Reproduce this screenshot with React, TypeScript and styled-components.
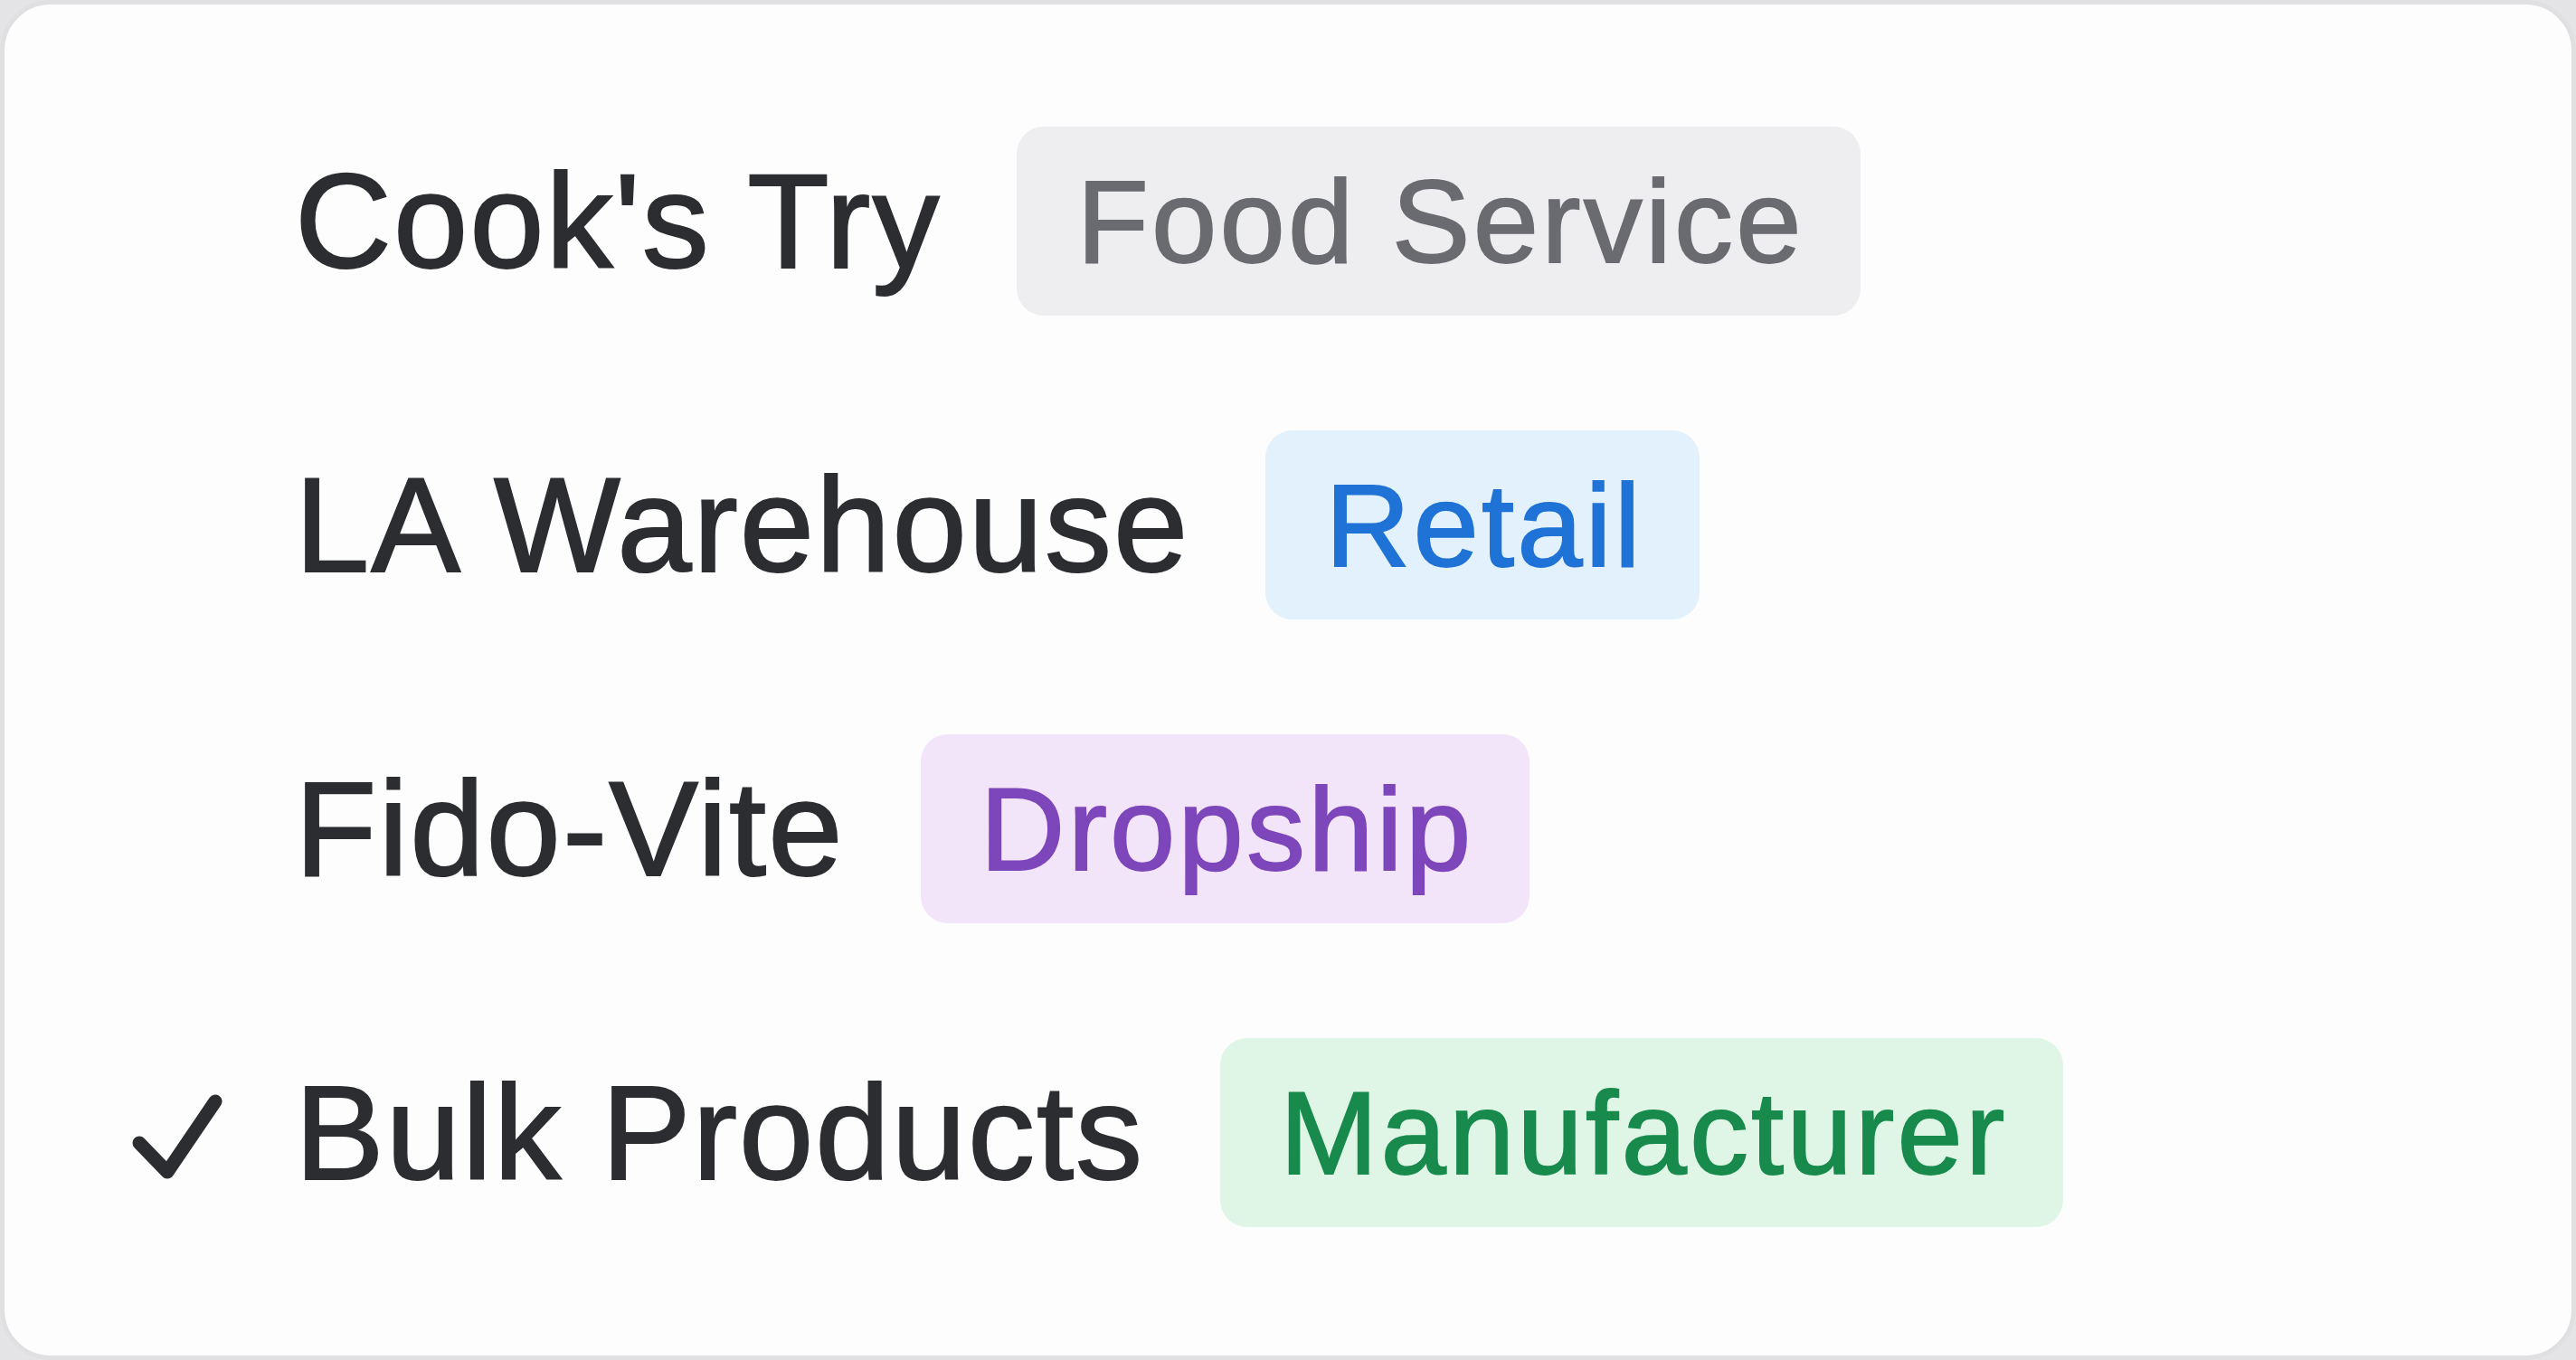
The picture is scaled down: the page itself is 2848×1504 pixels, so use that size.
import styled, { createGlobalStyle } from 'styled-components';

const GlobalStyle = createGlobalStyle`
    html, body {
        margin: 0;
        padding: 0;
        background: #e4e4e6;
    }
    body {
        font-family: "Liberation Sans", Arial, sans-serif;
    }
`;

type Tone = 'gray' | 'blue' | 'purple' | 'green';

const tones: Record<Tone, { bg: string; fg: string }> = {
    gray: { bg: '#eeeef0', fg: '#6a6b70' },
    blue: { bg: '#e2f1fb', fg: '#1f72d6' },
    purple: { bg: '#f3e5f9', fg: '#7d46ba' },
    green: { bg: '#dff6e7', fg: '#178a4c' },
};

const warehouses: { name: string; kind: string; tone: Tone; selected?: boolean }[] = [
    { name: "Cook's Try", kind: 'Food Service', tone: 'gray' },
    { name: 'LA Warehouse', kind: 'Retail', tone: 'blue' },
    { name: 'Fido-Vite', kind: 'Dropship', tone: 'purple' },
    { name: 'Bulk Products', kind: 'Manufacturer', tone: 'green', selected: true },
];

const CheckMark = () => (
    <svg width="100" height="100" viewBox="0 0 100 100" fill="none">
        <path
            d="M8 58 L39 90 L92 12"
            stroke="#2b2d31"
            strokeWidth="15"
            strokeLinecap="round"
            strokeLinejoin="round"
        />
    </svg>
);

const App = () => {
    return (
        <>
            <GlobalStyle />
            <StyledCard>
                <StyledList>
                    {warehouses.map((w) => (
                        <StyledRow key={w.name}>
                            <StyledCheckSlot>{w.selected ? <CheckMark /> : null}</StyledCheckSlot>
                            <StyledName>{w.name}</StyledName>
                            <StyledBadge $tone={w.tone}>{w.kind}</StyledBadge>
                        </StyledRow>
                    ))}
                </StyledList>
            </StyledCard>
        </>
    );
};

export default App;

const StyledCard = styled.div`
    box-sizing: border-box;
    width: 2848px;
    height: 1504px;
    background: #fdfdfd;
    border: 5px solid #e0e0e2;
    border-radius: 56px;
    padding-top: 135px;
    padding-left: 141px;
`;

const StyledList = styled.div`
    display: flex;
    flex-direction: column;
    gap: 127px;
`;

const StyledRow = styled.div`
    display: flex;
    align-items: center;
    height: 209px;
`;

const StyledCheckSlot = styled.div`
    width: 180px;
    flex-shrink: 0;
    display: flex;
    align-items: center;
    padding-top: 6px;
`;

const StyledName = styled.span`
    font-size: 148px;
    letter-spacing: 2px;
    color: #2b2d31;
    -webkit-text-stroke: 2px #2b2d31;
    line-height: 1;
    margin-right: 84px;
    white-space: nowrap;
`;

const StyledBadge = styled.span<{ $tone: Tone }>`
    box-sizing: border-box;
    height: 209px;
    display: inline-flex;
    align-items: center;
    padding: 0 62px 0 66px;
    border-radius: 30px;
    font-size: 130px;
    letter-spacing: 3.2px;
    line-height: 1;
    white-space: nowrap;
    background: ${({ $tone }) => tones[$tone].bg};
    color: ${({ $tone }) => tones[$tone].fg};
    -webkit-text-stroke: 1.8px ${({ $tone }) => tones[$tone].fg};
`;
